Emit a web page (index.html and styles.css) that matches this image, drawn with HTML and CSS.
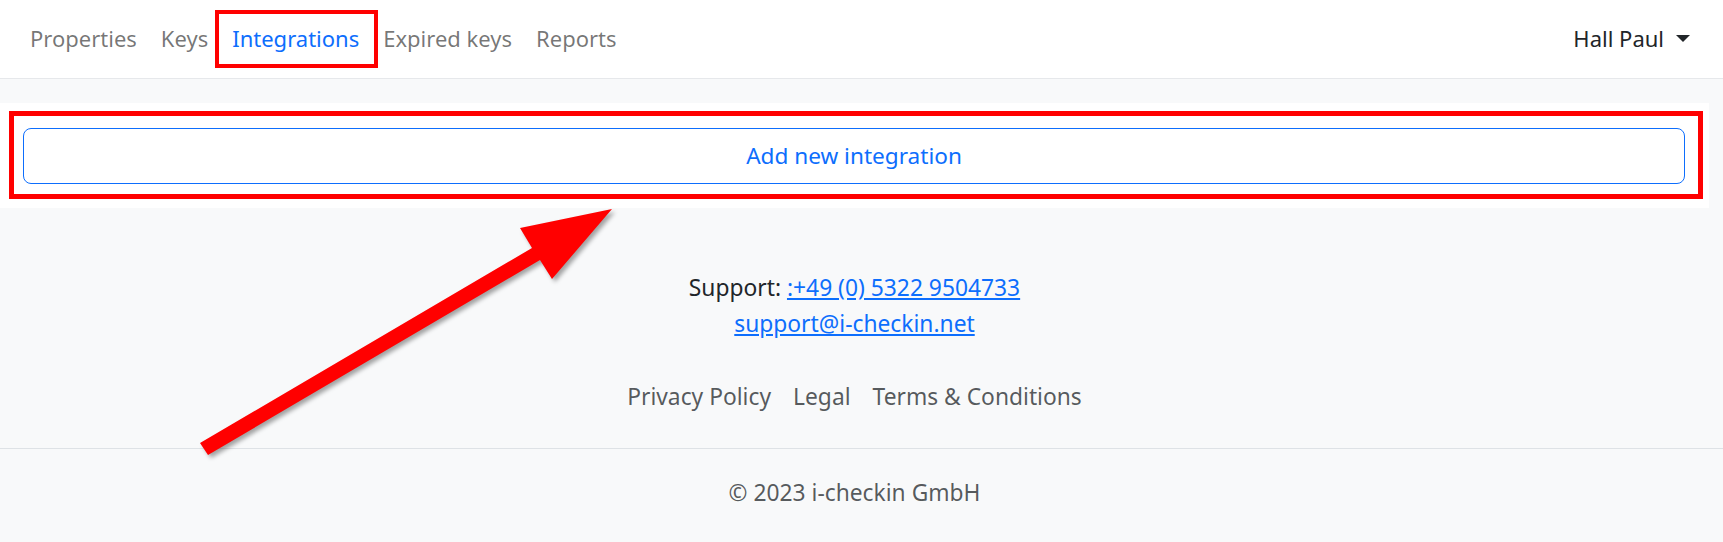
FILE: index.html
```html
<!DOCTYPE html>
<html lang="en">
<head>
<meta charset="utf-8">
<title>Integrations</title>
<link rel="stylesheet" href="styles.css">
</head>
<body>
<nav class="navbar">
  <ul class="nav-links">
    <li><a class="nav-link" href="#">Properties</a></li>
    <li><a class="nav-link" href="#">Keys</a></li>
    <li><a class="nav-link active" href="#">Integrations</a><span class="mark mark-nav"></span></li>
    <li><a class="nav-link" href="#">Expired keys</a></li>
    <li><a class="nav-link" href="#">Reports</a></li>
  </ul>
  <a class="user-menu" href="#">Hall Paul<span class="caret"></span></a>
</nav>
<main class="main">
  <section class="card">
    <button class="btn-outline" type="button">Add new integration</button>
    <span class="mark mark-card"></span>
  </section>
  <footer class="footer">
    <div class="support">
      <div>Support: <a href="#">:+49 (0) 5322 9504733</a></div>
      <div><a href="#">support@i-checkin.net</a></div>
    </div>
    <ul class="footer-links">
      <li><a href="#">Privacy Policy</a></li>
      <li><a href="#">Legal</a></li>
      <li><a href="#">Terms &amp; Conditions</a></li>
    </ul>
    <div class="copyright">© 2023 i-checkin GmbH</div>
  </footer>
</main>
<svg class="arrow" width="1723" height="542" viewBox="0 0 1723 542" xmlns="http://www.w3.org/2000/svg">
  <polygon points="200,443 532,248 520,228 612,209 552,279 540,260 208,455" fill="#ff0000"/>
</svg>
</body>
</html>
```
FILE: styles.css
```css
* { box-sizing: border-box; }
html, body { margin: 0; padding: 0; }
body {
  font-family: "Noto Sans", "Open Sans", sans-serif;
  font-size: 22px;
  line-height: 36px;
  color: #212529;
  background: #f8f9fa;
  position: relative;
  min-height: 542px;
}
a { text-decoration: none; }
ul { list-style: none; margin: 0; padding: 0; }

.navbar {
  height: 79px;
  background: #fff;
  border-bottom: 1px solid #e6e8eb;
  display: flex;
  align-items: center;
  justify-content: space-between;
  padding: 0 33px 2px 18px;
}
.nav-links { display: flex; align-items: center; }
.nav-links li { position: relative; }
.nav-link {
  display: block;
  padding: 0 12px;
  color: rgba(0, 0, 0, 0.55);
}
.nav-link.active { color: #0d6efd; }
.user-menu {
  color: #212529;
  display: flex;
  align-items: center;
}
.caret {
  display: inline-block;
  margin-left: 12px;
  border-top: 7px solid #212529;
  border-left: 7px solid transparent;
  border-right: 7px solid transparent;
}

.mark {
  position: absolute;
  border: 5px solid #ff0000;
  pointer-events: none;
}
.mark-nav {
  top: -10px;
  bottom: -12px;
  left: -5px;
  right: -7px;
  border-width: 4px;
}

.main { padding-top: 24px; }
.card {
  position: relative;
  background: #fff;
  margin-right: 14px;
  padding: 25px 24px 24px 23px;
}
.btn-outline {
  display: block;
  width: 100%;
  height: 56px;
  border: 1px solid #0d6efd;
  border-radius: 8px;
  background: transparent;
  color: #0d6efd;
  font-family: inherit;
  font-size: 22.6px;
  line-height: 36px;
  cursor: pointer;
}
.mark-card {
  top: 8px;
  left: 9px;
  right: 6px;
  bottom: 9px;
}

.footer {
  text-align: center;
  font-size: 22.8px;
}
.support {
  padding-top: 62px;
  padding-right: 14px;
}
.support a { color: #0d6efd; text-decoration: underline; }
.footer-links {
  display: flex;
  justify-content: center;
  padding: 37px 14px 33px 0;
  border-bottom: 1px solid #dee2e6;
}
.footer-links a {
  display: block;
  padding: 0 11px;
  color: rgba(33, 37, 41, 0.75);
}
.copyright {
  padding: 26px 14px 30px 0;
  color: rgba(33, 37, 41, 0.75);
}

.arrow {
  position: absolute;
  top: 0;
  left: 0;
  pointer-events: none;
  filter: drop-shadow(3px 3px 2px rgba(0, 0, 0, 0.35));
}
```
